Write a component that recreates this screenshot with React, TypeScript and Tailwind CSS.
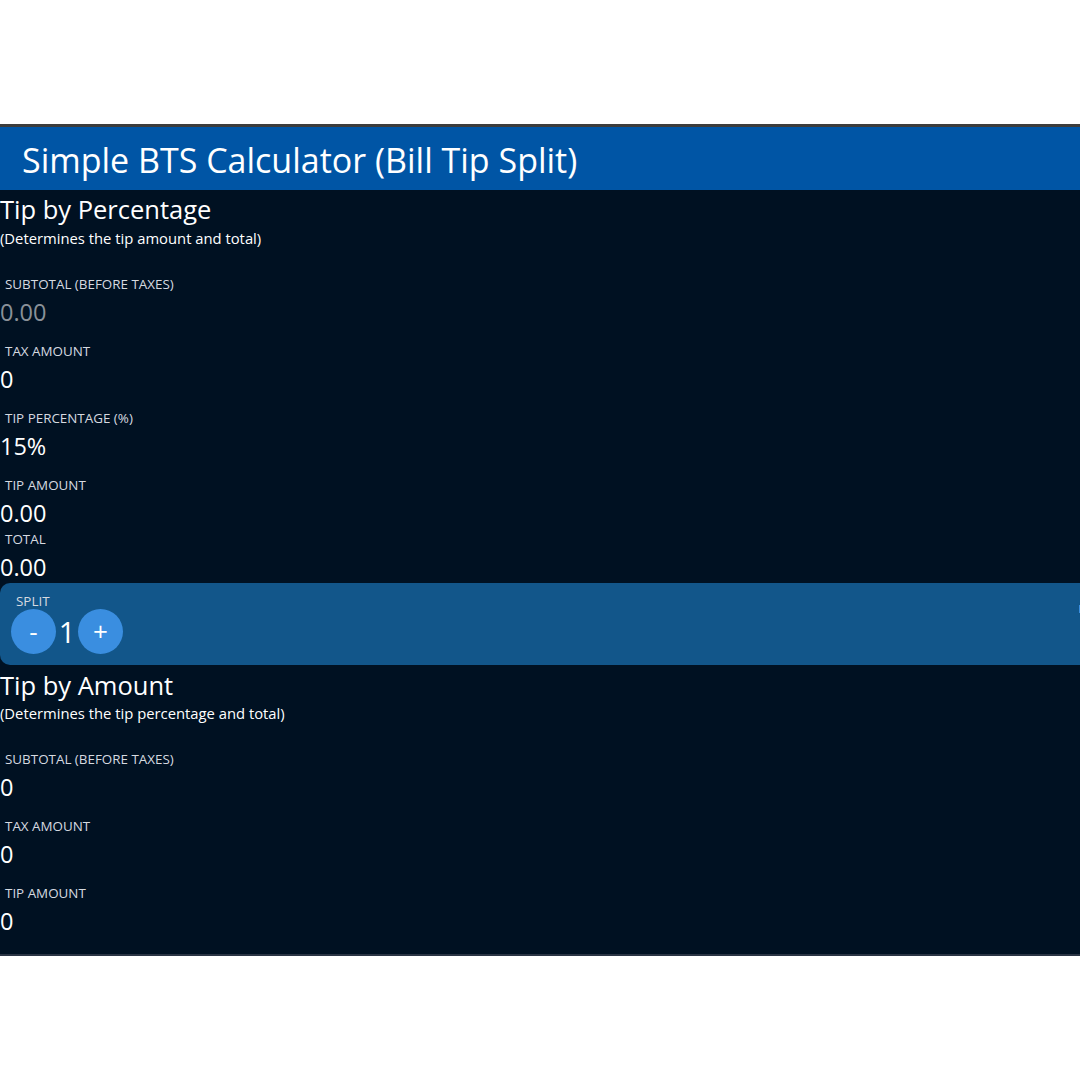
import React from "react";

const font = { fontFamily: '"Open Sans", "Noto Sans", Arial, sans-serif' };

function Field({ label, value, mt, placeholder }: { label: string; value: string; mt: string; placeholder?: boolean }) {
  return (
    <div className={`flex flex-col ${mt}`}>
      <div className="h-[18px] pl-[5px] text-[13.4px] leading-[18px] text-[#d6dae0]">{label}</div>
      <div
        className={`mt-[5px] h-[28px] text-[23.5px] leading-[28px] ${placeholder ? "text-[#8a9199]" : "text-white"}`}
      >
        {value}
      </div>
    </div>
  );
}

export default function App() {
  return (
    <div className="w-[1080px] h-[1080px] bg-white overflow-hidden" style={font}>
      <div className="h-[124px]" />
      <div className="h-[3px] bg-[#3c3c3c]" />
      <div className="h-[63px] bg-[#0055a5] flex items-center pl-[22px] pt-[4px] text-[34px] text-white">
        Simple BTS Calculator (Bill Tip Split)
      </div>
      <div className="h-[764px] bg-[#001122] text-white flex flex-col">
        <div className="mt-[4px] h-[30px] text-[25.5px] leading-[30px]">Tip by Percentage</div>
        <div className="mt-[4px] h-[20px] text-[14.8px] leading-[20px]">(Determines the tip amount and total)</div>
        <Field label="SUBTOTAL (BEFORE TAXES)" value="0.00" mt="mt-[27px]" placeholder />
        <Field label="TAX AMOUNT" value="0" mt="mt-[16px]" />
        <Field label="TIP PERCENTAGE (%)" value="15%" mt="mt-[16px]" />
        <Field label="TIP AMOUNT" value="0.00" mt="mt-[16px]" />
        <Field label="TOTAL" value="0.00" mt="mt-[3px]" />
        <div className="mt-[2px] h-[82px] bg-[#12568a] rounded-l-[10px] flex flex-col pl-[11px] relative">
          <div className="mt-[9px] h-[18px] pl-[5px] text-[13.4px] leading-[18px] text-[#d6dae0]">SPLIT</div>
          <div className="flex items-center mt-[-1px]">
            <div className="w-[45px] h-[45px] rounded-full bg-[#3a8ee0] flex items-center justify-center text-[26px] text-white">
              -
            </div>
            <div className="w-[22px] text-center text-[29px] leading-[45px] text-white">1</div>
            <div className="w-[45px] h-[45px] rounded-full bg-[#3a8ee0] flex items-center justify-center text-[26px] text-white">
              +
            </div>
          </div>
          <div className="absolute right-0 top-[22px] w-[1px] h-[8px] bg-[#3a8ee0]" />
        </div>
        <div className="mt-[5px] h-[30px] text-[25.5px] leading-[30px]">Tip by Amount</div>
        <div className="mt-[3px] h-[20px] text-[14.8px] leading-[20px]">(Determines the tip percentage and total)</div>
        <Field label="SUBTOTAL (BEFORE TAXES)" value="0" mt="mt-[27px]" />
        <Field label="TAX AMOUNT" value="0" mt="mt-[16px]" />
        <Field label="TIP AMOUNT" value="0" mt="mt-[16px]" />
      </div>
      <div className="h-[2px] bg-[#2a3444]" />
    </div>
  );
}
